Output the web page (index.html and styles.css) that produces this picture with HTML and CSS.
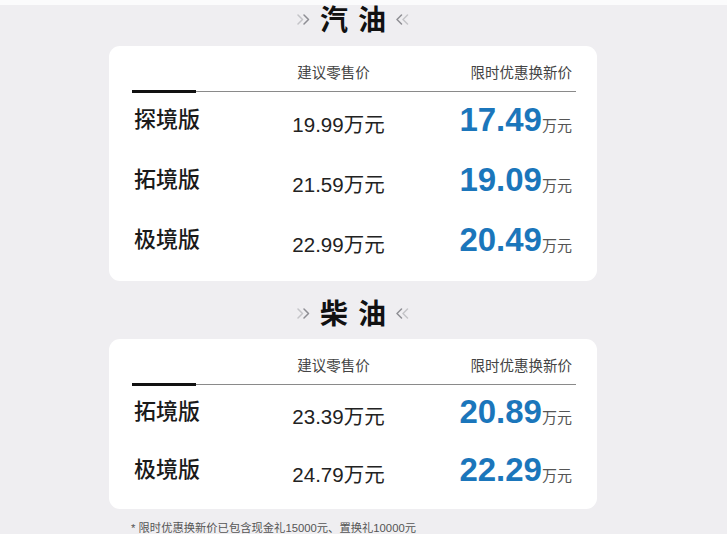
FILE: index.html
```html
<!DOCTYPE html>
<html lang="zh-CN">
<head>
<meta charset="utf-8">
<link rel="stylesheet" href="styles.css">
</head>
<body>
<div class="wrap">
  <div class="title title-first">
    <svg class="chev" viewBox="0 0 16 11" width="16" height="11"><polyline points="2,1 6.5,5.5 2,10" class="c-light"/><polyline points="8,1 12.5,5.5 8,10" class="c-dark"/></svg>
    <h2 class="title-text"><span>汽</span><span>油</span></h2>
    <svg class="chev" viewBox="0 0 16 11" width="16" height="11"><polyline points="7.5,1 3,5.5 7.5,10" class="c-dark"/><polyline points="13.5,1 9,5.5 13.5,10" class="c-light"/></svg>
  </div>
  <div class="card card-gas">
    <div class="head">
      <span></span>
      <span class="h-mid">建议零售价</span>
      <span class="h-right">限时优惠换新价</span>
    </div>
    <div class="rule"><span class="rule-thick"></span><span class="rule-thin"></span></div>
    <div class="row">
      <span class="name">探境版</span>
      <span class="msrp">19.99<span class="cn">万元</span></span>
      <span class="deal"><b>17.49</b><span class="unit">万元</span></span>
    </div>
    <div class="row">
      <span class="name">拓境版</span>
      <span class="msrp">21.59<span class="cn">万元</span></span>
      <span class="deal"><b>19.09</b><span class="unit">万元</span></span>
    </div>
    <div class="row">
      <span class="name">极境版</span>
      <span class="msrp">22.99<span class="cn">万元</span></span>
      <span class="deal"><b>20.49</b><span class="unit">万元</span></span>
    </div>
  </div>
  <div class="title title-second">
    <svg class="chev" viewBox="0 0 16 11" width="16" height="11"><polyline points="2,1 6.5,5.5 2,10" class="c-light"/><polyline points="8,1 12.5,5.5 8,10" class="c-dark"/></svg>
    <h2 class="title-text"><span>柴</span><span>油</span></h2>
    <svg class="chev" viewBox="0 0 16 11" width="16" height="11"><polyline points="7.5,1 3,5.5 7.5,10" class="c-dark"/><polyline points="13.5,1 9,5.5 13.5,10" class="c-light"/></svg>
  </div>
  <div class="card card-diesel">
    <div class="head">
      <span></span>
      <span class="h-mid">建议零售价</span>
      <span class="h-right">限时优惠换新价</span>
    </div>
    <div class="rule"><span class="rule-thick"></span><span class="rule-thin"></span></div>
    <div class="row">
      <span class="name">拓境版</span>
      <span class="msrp">23.39<span class="cn">万元</span></span>
      <span class="deal"><b>20.89</b><span class="unit">万元</span></span>
    </div>
    <div class="row">
      <span class="name">极境版</span>
      <span class="msrp">24.79<span class="cn">万元</span></span>
      <span class="deal"><b>22.29</b><span class="unit">万元</span></span>
    </div>
  </div>
  <p class="note">* 限时优惠换新价已包含现金礼15000元、置换礼10000元</p>
</div>
</body>
</html>
```
FILE: styles.css
```css
html, body {
  margin: 0;
  padding: 0;
}
body {
  background: linear-gradient(#fbfbfc 5px, #efeef1 5px);
  width: 727px;
  height: 534px;
  overflow: hidden;
  font-family: "Noto Sans CJK SC", sans-serif;
  color: #222;
}
.wrap {
  margin-left: 109px;
  width: 488px;
}
.title {
  display: flex;
  justify-content: center;
  align-items: center;
  gap: 8px;
  height: 34px;
}
.title-first {
  padding-top: 1px;
  padding-bottom: 11px;
}
.title-second {
  padding-top: 14px;
  padding-bottom: 10px;
}
.title-text {
  display: flex;
  gap: 10px;
  margin: 0;
  font-size: 28px;
  line-height: 34px;
  font-weight: 700;
  color: #111;
}
.chev {
  display: block;
  margin-top: 2px;
}
.chev polyline {
  fill: none;
  stroke-width: 1.5;
  stroke-linecap: round;
  stroke-linejoin: round;
}
.c-light { stroke: #c4c4c8; }
.c-dark { stroke: #8e8e94; }

.card {
  background: #fff;
  border-radius: 11px;
  padding: 0 21px 0 23px;
}
.card-gas { padding-bottom: 8px; }
.card-diesel { padding-bottom: 7px; }

.head, .row {
  display: grid;
  grid-template-columns: 130px 150px 1fr;
  align-items: center;
}
.head {
  height: 44px;
  font-size: 14.5px;
  color: #444;
  padding-top: 7px;
  box-sizing: border-box;
}
.h-mid {
  text-align: center;
  padding-right: 7px;
}
.h-right {
  text-align: right;
  padding-right: 4px;
}
.rule {
  display: flex;
  align-items: center;
  height: 3px;
}
.rule-thick {
  width: 64px;
  height: 3px;
  background: #111;
}
.rule-thin {
  flex: 1;
  height: 1px;
  background: #8a8a8a;
}
.row {
  height: 60px;
}
.card-diesel .row {
  height: 58px;
}
.name {
  font-size: 22px;
  font-weight: 500;
  line-height: 22px;
  padding-left: 2px;
  padding-bottom: 13px;
  color: #1a1a1a;
}
.msrp {
  text-align: center;
  font-family: "Liberation Sans", "Noto Sans CJK SC", sans-serif;
  font-size: 20.5px;
  line-height: 22px;
  padding-top: 2px;
  padding-left: 3px;
  color: #222;
}
.cn {
  font-family: "Noto Sans CJK SC", sans-serif;
}
.deal {
  text-align: right;
  padding-right: 4px;
  font-family: "Liberation Sans", "Noto Sans CJK SC", sans-serif;
  line-height: 32px;
  padding-bottom: 1px;
  white-space: nowrap;
}
.deal b {
  font-size: 33px;
  font-weight: 700;
  color: #1b76bb;
}
.unit {
  font-family: "Noto Sans CJK SC", sans-serif;
  font-size: 15px;
  color: #555;
  margin-left: 0;
}
.note {
  margin: 0;
  padding: 12px 0 0 22px;
  font-size: 11.3px;
  line-height: 14px;
  color: #555;
  font-family: "Liberation Sans", "Noto Sans CJK SC", sans-serif;
}
```
